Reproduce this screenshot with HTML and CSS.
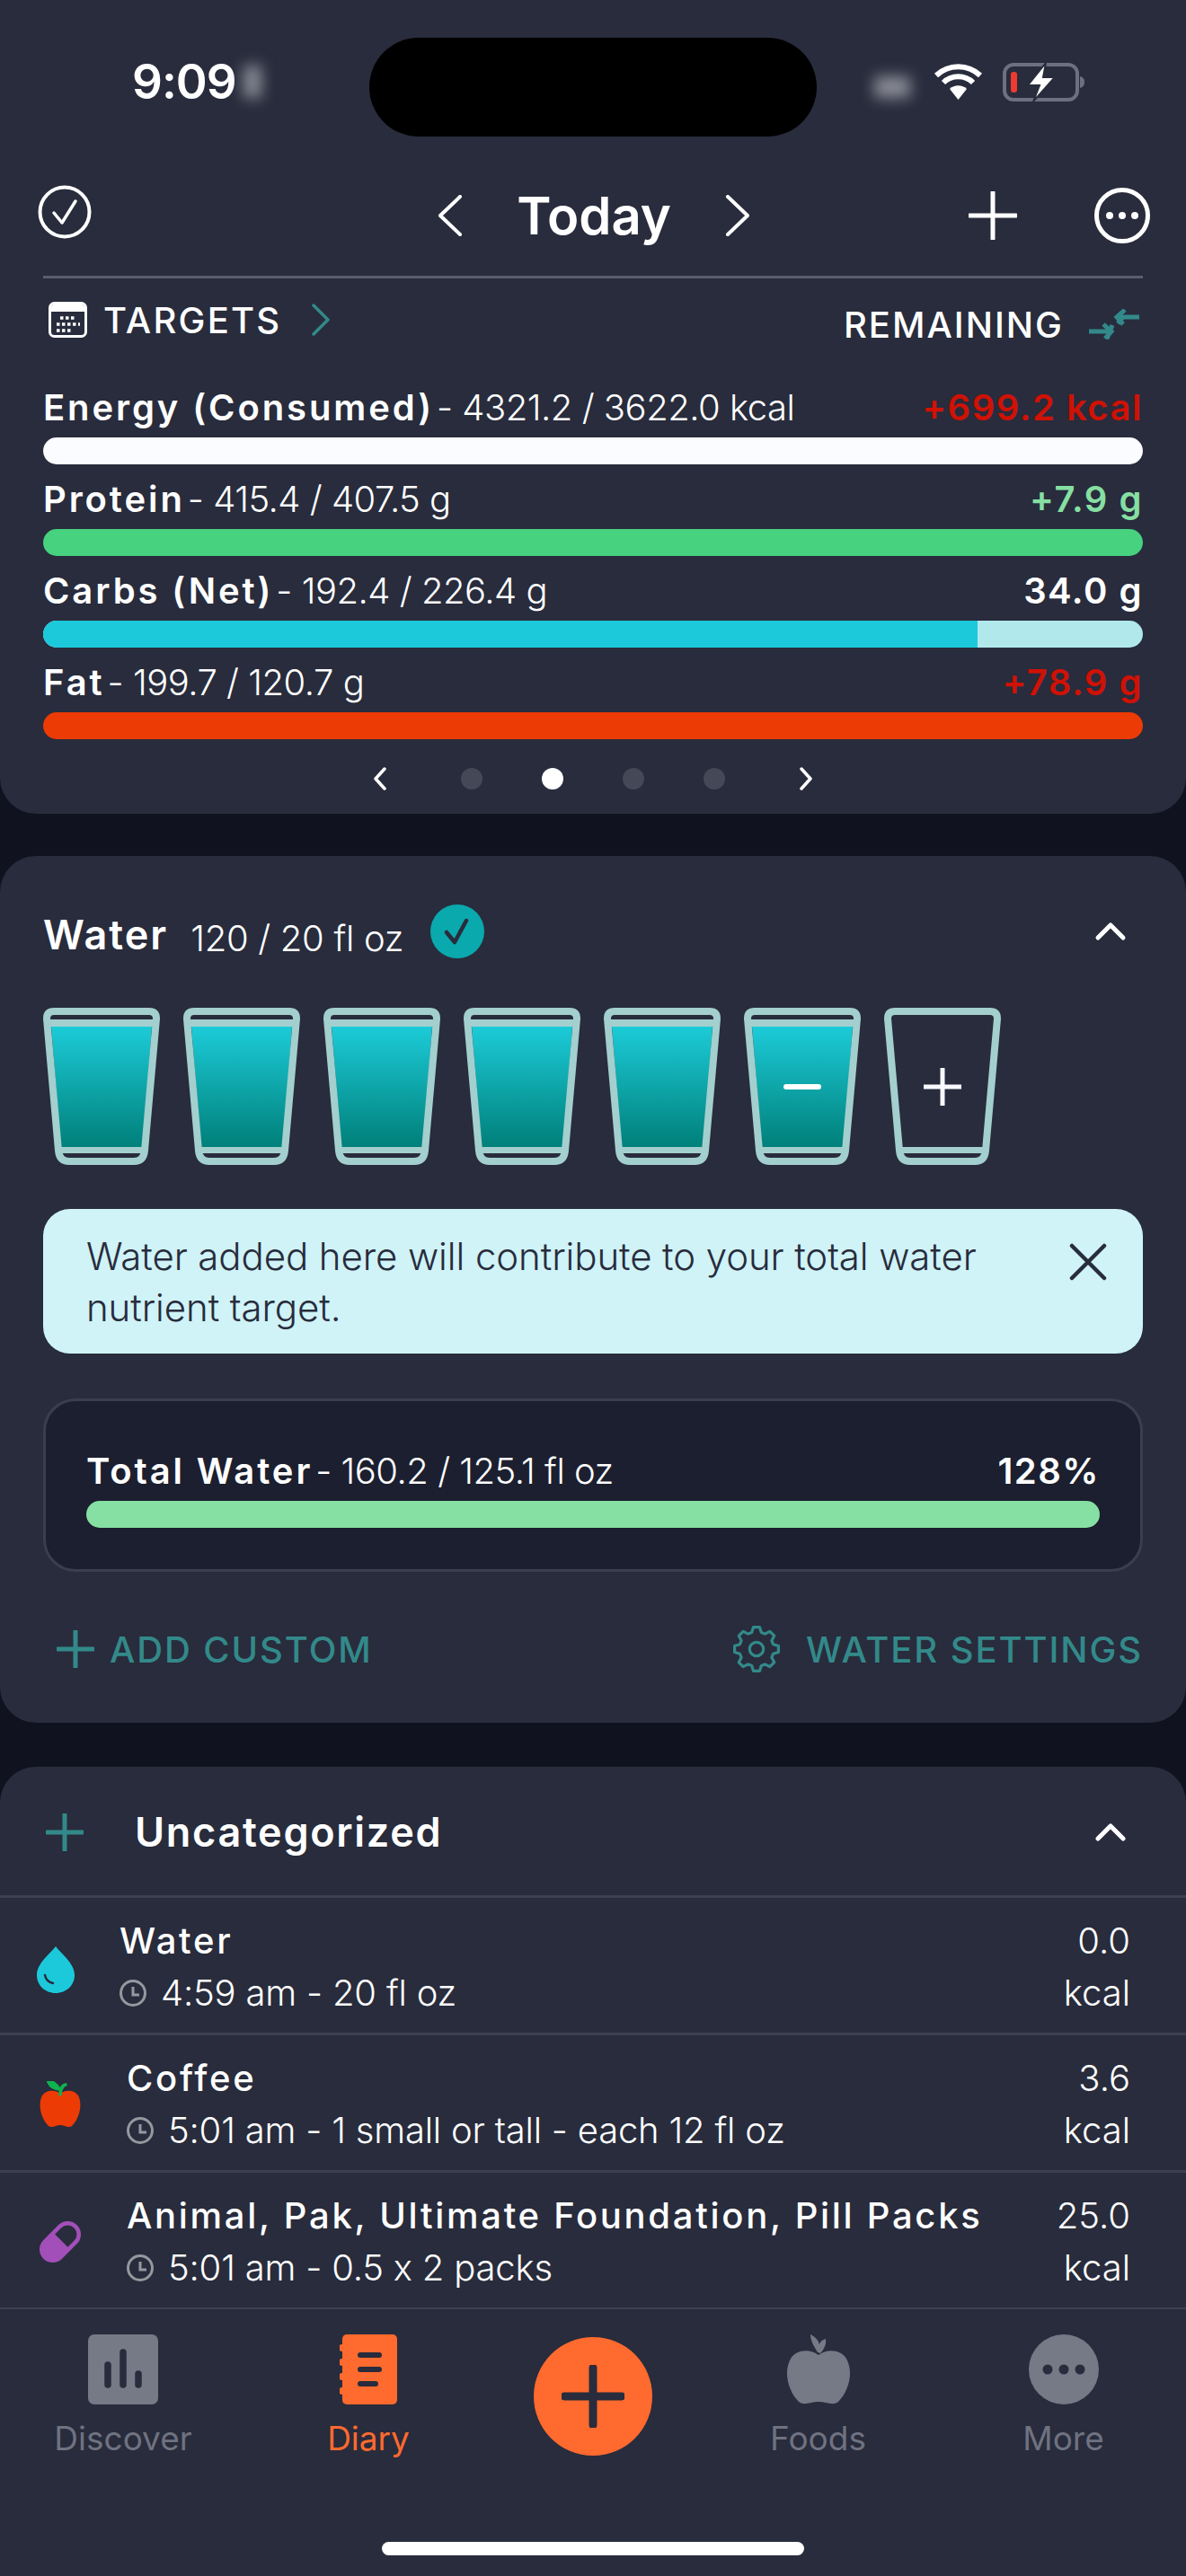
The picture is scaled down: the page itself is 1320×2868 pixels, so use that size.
FILE: index.html
```html
<!DOCTYPE html>
<html lang="en">
<head>
    <meta charset="UTF-8">
    <meta name="viewport" content="width=device-width, initial-scale=1.0">
    <title>Diary</title>
    <link rel="stylesheet" href="styles.css">
</head>
<body>
    <svg class="defs" width="0" height="0">
        <defs>
            <linearGradient id="waterFill" x1="0" y1="0" x2="0" y2="1">
                <stop offset="0" stop-color="#1ccbd8"/>
                <stop offset="1" stop-color="#00807a"/>
            </linearGradient>
            <symbol id="glassShell" viewBox="0 0 130 175">
                <path d="M12 4H118Q126 4 126 12L113 159Q112 171 101 171H29Q18 171 17 159L4 12Q4 4 12 4Z" fill="none" stroke="#a3cfce" stroke-width="8"/>
                <path d="M16 158.500H114" stroke="#a3cfce" stroke-width="7"/>
            </symbol>
            <symbol id="glassFull" viewBox="0 0 130 175">
                <path d="M9 21H121L111 155H20Z" fill="url(#waterFill)"/>
                <path d="M6 17H124" stroke="#a3cfce" stroke-width="8"/>
                <use href="#glassShell" width="130" height="175"/>
            </symbol>
        </defs>
    </svg>

    <section class="card card-summary">
        <div class="status-bar">
            <div class="status-left">
                <span class="clock">9:09</span>
                <span class="smudge smudge-left"></span>
            </div>
            <div class="island"></div>
            <div class="status-right">
                <span class="smudge smudge-right"></span>
                <svg class="wifi" viewBox="0 0 55 42">
                    <path d="M3 14C17 1 38 1 52 14M11 22C20 13 35 13 44 22" fill="none" stroke="#fff" stroke-width="6"/>
                    <path d="M18 29C23 24 32 24 37 29L27.500 41Z" fill="#fff"/>
                </svg>
                <svg class="battery" viewBox="0 0 91 43">
                    <rect x="2" y="2" width="81" height="39" rx="10" fill="none" stroke="#6d7080" stroke-width="4"/>
                    <rect x="9" y="10" width="7" height="23" rx="3" fill="#ee3a30"/>
                    <path d="M86 15C90 16 91 19 91 21C91 24 90 27 86 28Z" fill="#6d7080"/>
                    <path d="M48 0L28 25H41L34 43L58 16H45Z" fill="#fff" stroke="#282c3c" stroke-width="2"/>
                </svg>
            </div>
        </div>

        <div class="top-bar">
            <svg class="icon-check" viewBox="0 0 60 60">
                <circle cx="30" cy="30" r="27.500" fill="none" stroke="#fff" stroke-width="4"/>
                <path d="M18 31L27 42L42 18" fill="none" stroke="#fff" stroke-width="3.500" stroke-linecap="round" stroke-linejoin="round"/>
            </svg>
            <div class="date-nav">
                <svg class="icon-date-arrow" viewBox="0 0 28 46"><path d="M25 2L3 23L25 44" fill="none" stroke="#fff" stroke-width="4" stroke-linecap="round" stroke-linejoin="round"/></svg>
                <h1>Today</h1>
                <svg class="icon-date-arrow" viewBox="0 0 28 46"><path d="M3 2L25 23L3 44" fill="none" stroke="#fff" stroke-width="4" stroke-linecap="round" stroke-linejoin="round"/></svg>
            </div>
            <div class="top-actions">
                <svg class="icon-plus" viewBox="0 0 54 54"><path d="M27 1V53M1 27H53" stroke="#fff" stroke-width="5" stroke-linecap="round"/></svg>
                <svg class="icon-more" viewBox="0 0 62 62">
                    <circle cx="31" cy="31" r="28.500" fill="none" stroke="#fff" stroke-width="5"/>
                    <circle cx="17" cy="31" r="4" fill="#fff"/>
                    <circle cx="31" cy="31" r="4" fill="#fff"/>
                    <circle cx="45" cy="31" r="4" fill="#fff"/>
                </svg>
            </div>
        </div>

        <div class="divider"></div>

        <div class="targets-row">
            <div class="targets-left">
                <svg class="icon-calendar" viewBox="0 0 43 40">
                    <rect x="1.500" y="1.500" width="40" height="37" rx="5" fill="#282c3c" stroke="#fff" stroke-width="3"/>
                    <path d="M3 11V6Q3 3 6 3H37Q40 3 40 6V11Z" fill="#fff"/>
                    <path d="M13 18H31M9 25H35M9 32H27" stroke="#fff" stroke-width="3.500" stroke-dasharray="3.500 2.500"/>
                </svg>
                <span>TARGETS</span>
                <svg class="icon-teal-arrow" viewBox="0 0 22 36"><path d="M3 2L19 18L3 34" fill="none" stroke="#33898a" stroke-width="3.500" stroke-linecap="round" stroke-linejoin="round"/></svg>
            </div>
            <div class="targets-right">
                <span>REMAINING</span>
                <svg class="icon-swap" viewBox="0 0 56 34">
                    <path d="M56 9H32M40 1L31 9L38 17M38 9L32 16" fill="none" stroke="#33898a" stroke-width="5"/>
                    <path d="M0 25H24M16 17L25 25L18 33M26 18L20 33" fill="none" stroke="#33898a" stroke-width="5"/>
                </svg>
            </div>
        </div>

        <div class="macros">
            <div class="macro">
                <div class="macro-head">
                    <div><b class="label">Energy (Consumed)</b><span class="amount">- 4321.2 / 3622.0 kcal</span></div>
                    <b class="over">+699.2 kcal</b>
                </div>
                <div class="bar bar-white"></div>
            </div>
            <div class="macro">
                <div class="macro-head">
                    <div><b class="label">Protein</b><span class="amount">- 415.4 / 407.5 g</span></div>
                    <b class="good">+7.9 g</b>
                </div>
                <div class="bar bar-green"></div>
            </div>
            <div class="macro">
                <div class="macro-head">
                    <div><b class="label">Carbs (Net)</b><span class="amount">- 192.4 / 226.4 g</span></div>
                    <b>34.0 g</b>
                </div>
                <div class="bar bar-track"><div class="bar-fill" style="width: 85%"></div></div>
            </div>
            <div class="macro">
                <div class="macro-head">
                    <div><b class="label">Fat</b><span class="amount">- 199.7 / 120.7 g</span></div>
                    <b class="over">+78.9 g</b>
                </div>
                <div class="bar bar-red"></div>
            </div>
        </div>

        <div class="pager">
            <svg class="icon-pager" viewBox="0 0 16 26"><path d="M13 2L3 13L13 24" fill="none" stroke="#fff" stroke-width="3.500" stroke-linecap="round" stroke-linejoin="round"/></svg>
            <span class="dot"></span>
            <span class="dot dot-on"></span>
            <span class="dot"></span>
            <span class="dot"></span>
            <svg class="icon-pager" viewBox="0 0 16 26"><path d="M3 2L13 13L3 24" fill="none" stroke="#fff" stroke-width="3.500" stroke-linecap="round" stroke-linejoin="round"/></svg>
        </div>
    </section>

    <section class="card card-water">
        <div class="water-head">
            <h2>Water</h2>
            <span class="water-amount">120 / 20 fl oz</span>
            <svg class="icon-done" viewBox="0 0 60 60">
                <circle cx="30" cy="30" r="30" fill="#0aa9ad"/>
                <path d="M18 31L27 42L40 18" fill="none" stroke="#282c3c" stroke-width="4.500" stroke-linecap="round" stroke-linejoin="round"/>
            </svg>
            <svg class="icon-collapse" viewBox="0 0 36 22"><path d="M4 18L18 4L32 18" fill="none" stroke="#fff" stroke-width="5" stroke-linecap="round" stroke-linejoin="round"/></svg>
        </div>

        <div class="glasses">
            <svg class="glass" viewBox="0 0 130 175"><use href="#glassFull" width="130" height="175"/></svg>
            <svg class="glass" viewBox="0 0 130 175"><use href="#glassFull" width="130" height="175"/></svg>
            <svg class="glass" viewBox="0 0 130 175"><use href="#glassFull" width="130" height="175"/></svg>
            <svg class="glass" viewBox="0 0 130 175"><use href="#glassFull" width="130" height="175"/></svg>
            <svg class="glass" viewBox="0 0 130 175"><use href="#glassFull" width="130" height="175"/></svg>
            <svg class="glass" viewBox="0 0 130 175">
                <use href="#glassFull" width="130" height="175"/>
                <path d="M47 88H83" stroke="#fff" stroke-width="6" stroke-linecap="round"/>
            </svg>
            <svg class="glass" viewBox="0 0 130 175">
                <use href="#glassShell" width="130" height="175"/>
                <path d="M65 67V109M44 88H86" stroke="#f7f8ff" stroke-width="5"/>
            </svg>
        </div>

        <div class="notice">
            <p>Water added here will contribute to your total water nutrient target.</p>
            <svg class="icon-close" viewBox="0 0 42 42"><path d="M3 3L39 39M39 3L3 39" stroke="#282c3c" stroke-width="4.500" stroke-linecap="round"/></svg>
        </div>

        <div class="total-box">
            <div class="macro-head">
                <div><b class="label">Total Water</b><span class="amount">- 160.2 / 125.1 fl oz</span></div>
                <b>128%</b>
            </div>
            <div class="bar bar-mint"></div>
        </div>

        <div class="water-actions">
            <div class="water-link">
                <svg class="icon-add" viewBox="0 0 42 42"><path d="M21 1V41M1 21H41" stroke="#33898a" stroke-width="5" stroke-linecap="round"/></svg>
                <span>ADD CUSTOM</span>
            </div>
            <div class="water-link">
                <svg class="icon-gear" viewBox="-14 -14 28 28">
                    <polygon points="-2.48,-8.65 -1.6,-11.39 1.6,-11.39 2.48,-8.65 4.36,-7.87 6.92,-9.19 9.19,-6.92 7.87,-4.36 8.65,-2.48 11.39,-1.6 11.39,1.6 8.65,2.48 7.87,4.36 9.19,6.92 6.92,9.19 4.36,7.87 2.48,8.65 1.6,11.39 -1.6,11.39 -2.48,8.65 -4.36,7.87 -6.92,9.19 -9.19,6.92 -7.87,4.36 -8.65,2.48 -11.39,1.6 -11.39,-1.6 -8.65,-2.48 -7.87,-4.36 -9.19,-6.92 -6.92,-9.19 -4.36,-7.87" fill="none" stroke="#33898a" stroke-width="1.500" stroke-linejoin="round"/>
                    <circle r="3.600" fill="none" stroke="#33898a" stroke-width="1.500"/>
                </svg>
                <span>WATER SETTINGS</span>
            </div>
        </div>
    </section>

    <section class="card card-log">
        <div class="log-head">
            <svg class="icon-log-add" viewBox="0 0 42 42"><path d="M21 1V41M1 21H41" stroke="#33898a" stroke-width="5" stroke-linecap="round"/></svg>
            <h2>Uncategorized</h2>
            <svg class="icon-collapse" viewBox="0 0 36 22"><path d="M4 18L18 4L32 18" fill="none" stroke="#fff" stroke-width="5" stroke-linecap="round" stroke-linejoin="round"/></svg>
        </div>

        <div class="log-row row-water">
            <svg class="food-icon" viewBox="0 0 42 52">
                <path d="M21 0C28 9 42 19 42 32C42 43 33 52 21 52C9 52 0 43 0 32C0 19 14 9 21 0Z" fill="#1cc9db"/>
                <path d="M9 32C10 37 13 40 18 41" fill="none" stroke="#282c3c" stroke-width="2.500" stroke-linecap="round"/>
            </svg>
            <div class="log-text">
                <div class="log-title">Water</div>
                <div class="log-sub">
                    <svg class="icon-time" viewBox="0 0 30 30"><circle cx="15" cy="15" r="13.500" fill="none" stroke="#96989f" stroke-width="3"/><path d="M15 8V17H22" fill="none" stroke="#96989f" stroke-width="3"/></svg>
                    <span>4:59 am - 20 fl oz</span>
                </div>
            </div>
            <div class="log-kcal"><span>0.0</span><span>kcal</span></div>
        </div>
        <div class="log-row">
            <svg class="food-icon" viewBox="0 0 46 52">
                <path d="M23 14C17 9 7 10 3 16C-2 25 1 41 10 50C14 53 18 49 23 49C28 49 32 53 36 50C45 41 48 25 43 16C39 10 29 9 23 14Z" fill="#ec3b05"/>
                <path d="M23 15C23 9 24 5 29 4M22 9C18 2 13 0 10 1C12 6 17 9 22 9Z" fill="#10b14f" stroke="#10b14f" stroke-width="3.500" stroke-linecap="round"/>
            </svg>
            <div class="log-text">
                <div class="log-title">Coffee</div>
                <div class="log-sub">
                    <svg class="icon-time" viewBox="0 0 30 30"><circle cx="15" cy="15" r="13.500" fill="none" stroke="#96989f" stroke-width="3"/><path d="M15 8V17H22" fill="none" stroke="#96989f" stroke-width="3"/></svg>
                    <span>5:01 am - 1 small or tall - each 12 fl oz</span>
                </div>
            </div>
            <div class="log-kcal"><span>3.6</span><span>kcal</span></div>
        </div>
        <div class="log-row">
            <svg class="food-icon" viewBox="0 0 50 50">
                <g transform="rotate(-45 25 25)">
                    <rect x="-3.750" y="9" width="57.500" height="32" rx="16" fill="#a24fb9"/>
                    <path d="M27 14H37.750A11 11 0 0 1 37.750 36H27Z" fill="#282c3c"/>
                </g>
            </svg>
            <div class="log-text">
                <div class="log-title">Animal, Pak, Ultimate Foundation, Pill Packs</div>
                <div class="log-sub">
                    <svg class="icon-time" viewBox="0 0 30 30"><circle cx="15" cy="15" r="13.500" fill="none" stroke="#96989f" stroke-width="3"/><path d="M15 8V17H22" fill="none" stroke="#96989f" stroke-width="3"/></svg>
                    <span>5:01 am - 0.5 x 2 packs</span>
                </div>
            </div>
            <div class="log-kcal"><span>25.0</span><span>kcal</span></div>
        </div>
    </section>

    <nav class="tab-bar">
        <div class="tab">
            <svg class="tab-icon" viewBox="0 0 78 78">
                <rect width="78" height="78" rx="7" fill="#767986"/>
                <path d="M22 34V56M39 20V56M56 44V56" stroke="#282c3c" stroke-width="7.500" stroke-linecap="round"/>
            </svg>
            <span>Discover</span>
        </div>
        <div class="tab tab-on">
            <svg class="tab-icon" viewBox="0 0 64 78">
                <rect x="3" width="61" height="78" rx="5" fill="#ff6a2e"/>
                <path d="M3 15V15M3 31V31M3 47V47M3 63V63" stroke="#ff6a2e" stroke-width="8" stroke-linecap="round"/>
                <path d="M23 23H44M23 39H44M23 55H40" stroke="#282c3c" stroke-width="6" stroke-linecap="round"/>
            </svg>
            <span>Diary</span>
        </div>
        <div class="fab">
            <svg class="fab-plus" viewBox="0 0 70 70"><path d="M35 3V67M3 35H67" stroke="#282c3c" stroke-width="9" stroke-linecap="round"/></svg>
        </div>
        <div class="tab">
            <svg class="tab-icon" viewBox="0 0 72 78">
                <path d="M36 23C27 16 10 16 4 29C-3 44 3 64 14 75C20 80 28 75 36 75C44 75 52 80 58 75C69 64 75 44 68 29C62 16 45 16 36 23Z" fill="#767986"/>
                <path d="M35 20C30 12 27 6 27 0C33 3 36 7 37 11C38 8 40 6 44 5C45 11 42 17 38 21Z" fill="#767986"/>
            </svg>
            <span>Foods</span>
        </div>
        <div class="tab">
            <svg class="tab-icon" viewBox="0 0 78 78">
                <circle cx="39" cy="39" r="39" fill="#767986"/>
                <circle cx="21" cy="39" r="5.500" fill="#282c3c"/>
                <circle cx="39" cy="39" r="5.500" fill="#282c3c"/>
                <circle cx="57" cy="39" r="5.500" fill="#282c3c"/>
            </svg>
            <span>More</span>
        </div>
    </nav>
    <div class="home-area"><div class="home-bar"></div></div>
</body>
</html>
```

FILE: styles.css
```css
* {
    box-sizing: border-box;
}
html, body {
    margin: 0;
    padding: 0;
}
body {
    width: 1320px;
    height: 2868px;
    overflow: hidden;
    background: #10121f;
    color: #fff;
    font-family: Inter, "Noto Sans", sans-serif;
    font-feature-settings: "calt" 0;
}
svg {
    display: block;
    flex: none;
}
.defs {
    position: absolute;
}
h1, h2, p {
    margin: 0;
}
b {
    font-weight: 600;
}

.card {
    background: #282c3c;
}
.card-summary {
    height: 906px;
    padding: 0 48px;
    border-radius: 0 0 40px 40px;
}
.card-water {
    height: 965px;
    margin-top: 47px;
    padding: 54px 48px 0;
    border-radius: 40px;
}
.card-log {
    height: 604px;
    margin-top: 49px;
    border-radius: 40px 40px 0 0;
}

/* status bar */
.status-bar {
    display: grid;
    grid-template-columns: 363px 498px 1fr;
    height: 152px;
    padding-top: 42px;
}
.status-left {
    display: flex;
    align-items: center;
    padding: 0 0 12px 99px;
    gap: 8px;
}
.clock {
    font-size: 53px;
    font-weight: 600;
    letter-spacing: -1px;
}
.smudge {
    display: block;
    background: #8a8c96;
    filter: blur(8px);
}
.smudge-left {
    width: 20px;
    height: 36px;
}
.smudge-right {
    width: 40px;
    height: 24px;
    margin: 12px 26px 0 -8px;
}
.island {
    height: 110px;
    border-radius: 55px;
    background: #000;
}
.status-right {
    display: flex;
    align-items: center;
    padding: 0 0 12px 72px;
}
.wifi {
    width: 55px;
    height: 42px;
}
.battery {
    width: 91px;
    height: 43px;
    margin-left: 22px;
}

/* date row */
.top-bar {
    display: grid;
    grid-template-columns: 1fr auto 1fr;
    align-items: center;
    height: 72px;
    margin: 52px -8px 0 -6px;
}
.icon-check {
    width: 60px;
    height: 60px;
    margin-top: -8px;
}
.date-nav {
    display: flex;
    align-items: center;
    gap: 60px;
}
.date-nav h1 {
    font-size: 58px;
    font-weight: 600;
    line-height: 72px;
}
.icon-date-arrow {
    width: 28px;
    height: 46px;
}
.top-actions {
    display: flex;
    align-items: center;
    justify-content: flex-end;
    gap: 86px;
}
.icon-plus {
    width: 54px;
    height: 54px;
}
.icon-more {
    width: 62px;
    height: 62px;
}
.divider {
    height: 3px;
    margin-top: 31px;
    background: #5a5d6c;
}

/* targets row */
.targets-row {
    display: flex;
    justify-content: space-between;
    height: 52px;
    margin-top: 20px;
    font-size: 40px;
    font-weight: 500;
    letter-spacing: 2.200px;
}
.targets-left, .targets-right {
    display: flex;
    align-items: center;
}
.targets-right {
    padding-top: 10px;
    letter-spacing: 2px;
}
.icon-calendar {
    width: 43px;
    height: 40px;
    margin: 0 18px 0 6px;
}
.icon-teal-arrow {
    width: 22px;
    height: 36px;
    margin-left: 33px;
}
.icon-swap {
    width: 56px;
    height: 34px;
    margin: 0 4px 0 28px;
}

/* macro rows */
.macros {
    margin-top: 47px;
}
.macro {
    margin-bottom: 14px;
}
.macro-head {
    display: flex;
    justify-content: space-between;
    align-items: baseline;
    height: 50px;
    margin-bottom: 8px;
    font-size: 40px;
    line-height: 50px;
    letter-spacing: 1.500px;
}
.label {
    letter-spacing: 2.900px;
}
.amount {
    margin-left: 3px;
    font-weight: 300;
    letter-spacing: -0.500px;
}
.over {
    color: #d01105;
}
.good {
    color: #86dfa2;
}
.bar {
    height: 30px;
    border-radius: 15px;
    overflow: hidden;
}
.bar-white {
    background: #fbfcff;
}
.bar-green {
    background: #46d27e;
}
.bar-track {
    background: #b0e8ec;
}
.bar-fill {
    height: 100%;
    background: #1cc9db;
}
.bar-red {
    background: #ec3b05;
}
.bar-mint {
    background: #86e0a3;
}

.pager {
    display: flex;
    align-items: center;
    justify-content: center;
    gap: 66px;
    margin-top: 31px;
}
.icon-pager {
    width: 16px;
    height: 26px;
    margin: 0 16px;
}
.dot {
    width: 24px;
    height: 24px;
    border-radius: 50%;
    background: #454856;
}
.dot-on {
    background: #fff;
}

/* water card */
.water-head {
    display: flex;
    align-items: center;
    height: 60px;
}
.water-head h2 {
    font-size: 45px;
    font-weight: 600;
    line-height: 60px;
    margin-top: 8px;
    letter-spacing: 2px;
}
.water-amount {
    margin: 14px 0 0 25px;
    font-size: 40px;
    font-weight: 300;
    letter-spacing: -0.300px;
}
.icon-done {
    width: 60px;
    height: 60px;
    margin-left: 30px;
}
.icon-collapse {
    width: 36px;
    height: 22px;
    margin-left: auto;
    margin-right: 18px;
}
.glasses {
    display: flex;
    gap: 26px;
    margin-top: 55px;
}
.glass {
    width: 130px;
    height: 175px;
}
.notice {
    display: flex;
    justify-content: space-between;
    height: 161px;
    margin-top: 49px;
    padding: 24px 40px 0 48px;
    border-radius: 30px;
    background: #cff3f7;
    color: #282c3c;
    font-size: 42px;
    font-weight: 300;
    line-height: 57px;
    letter-spacing: -0.100px;
}
.notice p {
    width: 1060px;
}
.icon-close {
    width: 42px;
    height: 42px;
    margin-top: 14px;
}
.total-box {
    height: 193px;
    margin-top: 50px;
    padding: 53px 45px 0;
    border: 3px solid #3b3e4e;
    border-radius: 36px;
    background: #1c1f2f;
}
.water-actions {
    display: flex;
    justify-content: space-between;
    margin-top: 58px;
    font-size: 40px;
    font-weight: 500;
    color: #33898a;
    letter-spacing: 1.900px;
}
.water-link {
    display: flex;
    align-items: center;
    height: 56px;
}
.icon-add {
    width: 42px;
    height: 42px;
    margin: 0 17px 0 15px;
}
.icon-gear {
    width: 60px;
    height: 60px;
    margin-right: 25px;
}

/* log card */
.log-head {
    display: flex;
    align-items: center;
    height: 146px;
    padding: 2px 0 0 51px;
    border-bottom: 3px solid #3d4050;
}
.icon-log-add {
    width: 42px;
    height: 42px;
    margin-right: 57px;
}
.log-head h2 {
    font-size: 45px;
    font-weight: 600;
    letter-spacing: 1.700px;
}
.log-head .icon-collapse {
    margin-right: 66px;
}
.log-row {
    display: flex;
    align-items: center;
    height: 153px;
    padding: 4px 62px 0 44px;
    border-bottom: 3px solid #3d4050;
}
.food-icon {
    height: 52px;
    width: 46px;
    margin-right: 51px;
}
.row-water .food-icon {
    width: 42px;
    margin-top: 6px;
    margin-left: -3px;
    margin-right: 50px;
}
.log-text {
    flex: 1;
}
.log-title {
    font-size: 40px;
    font-weight: 500;
    line-height: 58px;
    letter-spacing: 2.700px;
}
.log-sub {
    display: flex;
    align-items: center;
    gap: 16px;
    font-size: 40px;
    font-weight: 300;
    line-height: 58px;
    letter-spacing: -0.200px;
}
.icon-time {
    width: 30px;
    height: 30px;
}
.log-kcal {
    display: flex;
    flex-direction: column;
    align-items: flex-end;
    font-size: 40px;
    font-weight: 300;
    line-height: 58px;
}

/* tab bar */
.tab-bar {
    display: grid;
    grid-template-columns: 274px 272px 228px 273px 273px;
    height: 203px;
    padding-top: 28px;
    background: #282c3c;
}
.tab {
    display: flex;
    flex-direction: column;
    align-items: center;
    font-size: 37px;
    color: #6f7280;
}
.tab span {
    margin-top: 15px;
}
.tab-on {
    color: #ff6a2e;
}
.tab-icon {
    height: 78px;
}
.fab {
    display: flex;
    align-items: center;
    justify-content: center;
    width: 132px;
    height: 132px;
    margin: 3px 0 0 48px;
    border-radius: 50%;
    background: #ff6a2e;
}
.fab-plus {
    width: 70px;
    height: 70px;
}
.home-area {
    display: flex;
    justify-content: center;
    height: 95px;
    padding-top: 56px;
    background: #282c3c;
}
.home-bar {
    width: 470px;
    height: 15px;
    border-radius: 8px;
    background: #fff;
}
```
